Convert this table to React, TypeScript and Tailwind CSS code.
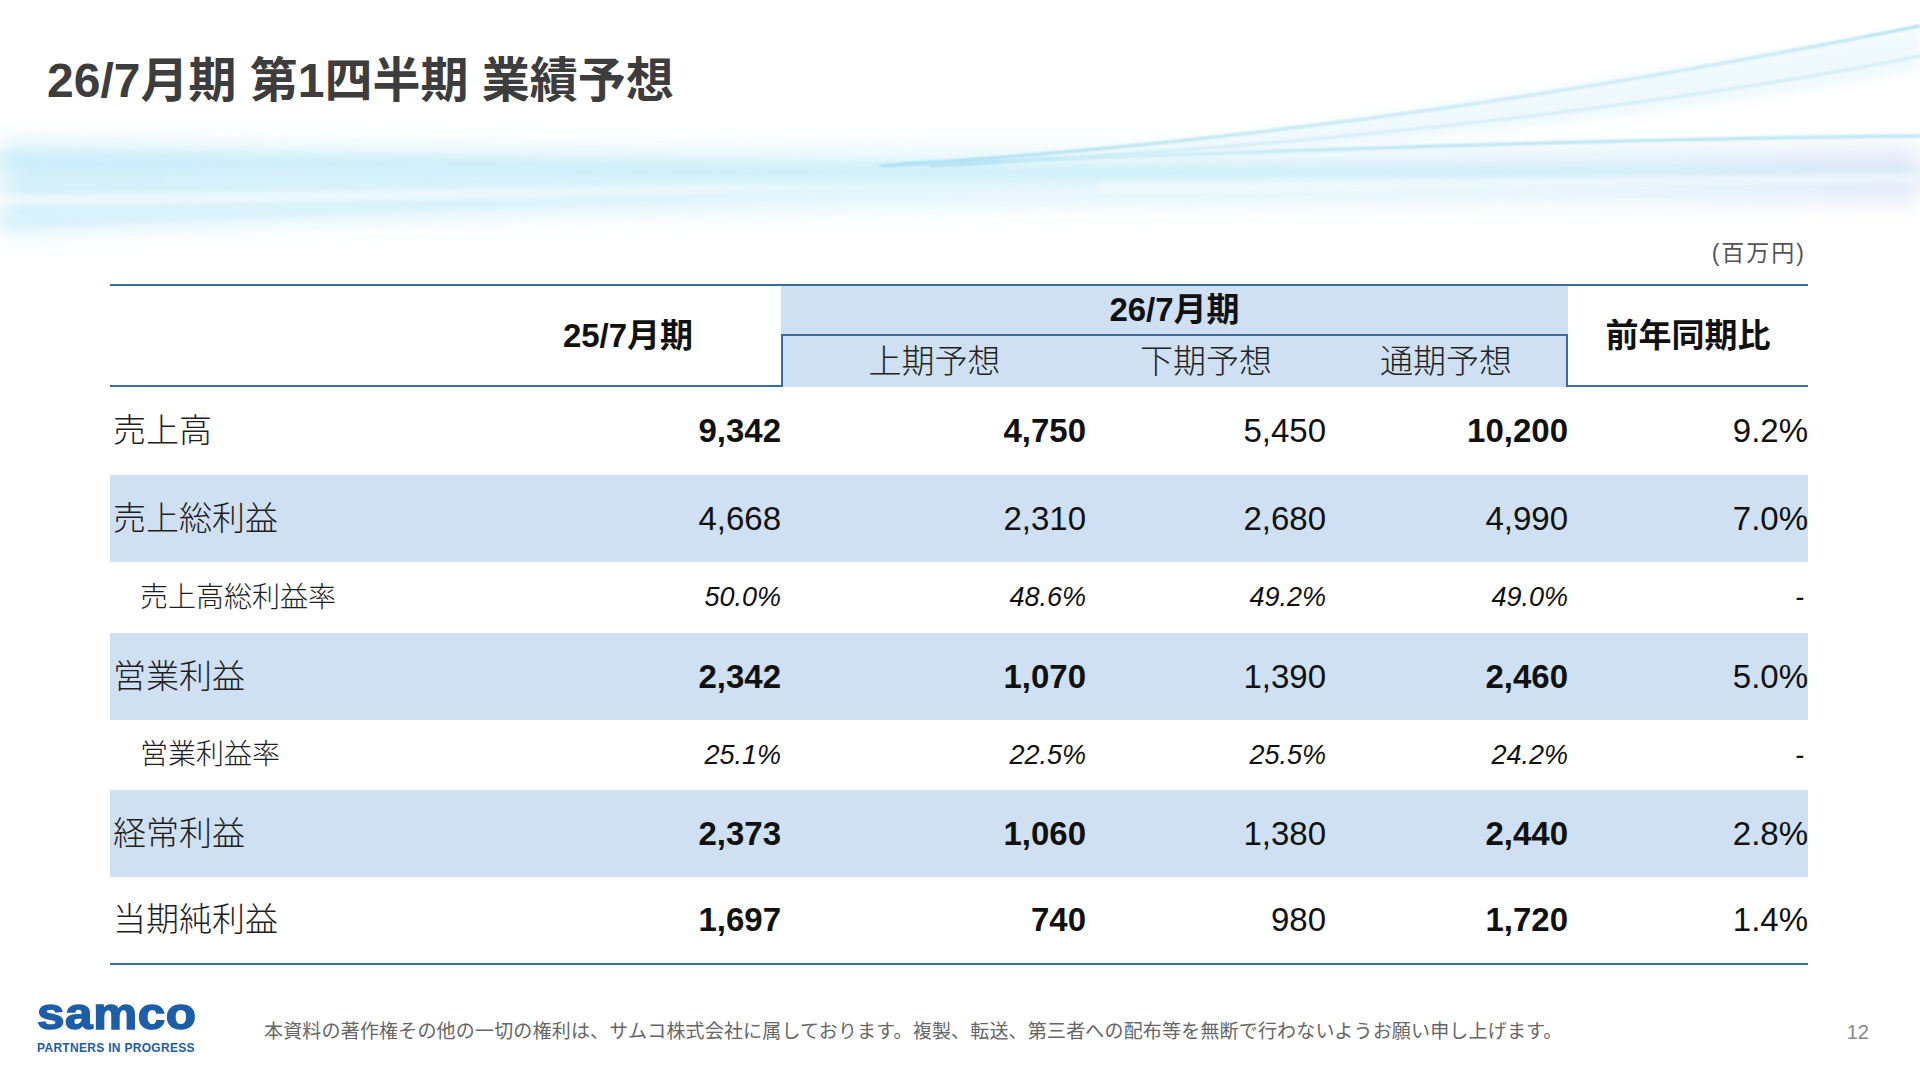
import React from 'react';

type Row = {
  label: string;
  sub?: boolean;
  shaded?: boolean;
  values: string[];
  bold?: boolean[];
};

const rows: Row[] = [
  { label: '売上高', values: ['9,342', '4,750', '5,450', '10,200', '9.2%'], bold: [true, true, false, true, false] },
  { label: '売上総利益', shaded: true, values: ['4,668', '2,310', '2,680', '4,990', '7.0%'] },
  { label: '売上高総利益率', sub: true, values: ['50.0%', '48.6%', '49.2%', '49.0%', '-'] },
  { label: '営業利益', shaded: true, values: ['2,342', '1,070', '1,390', '2,460', '5.0%'], bold: [true, true, false, true, false] },
  { label: '営業利益率', sub: true, values: ['25.1%', '22.5%', '25.5%', '24.2%', '-'] },
  { label: '経常利益', shaded: true, values: ['2,373', '1,060', '1,380', '2,440', '2.8%'], bold: [true, true, false, true, false] },
  { label: '当期純利益', values: ['1,697', '740', '980', '1,720', '1.4%'], bold: [true, true, false, true, false] },
];

// widths of the value columns: 25/7, 上期, 下期, 通期, 前年同期比
const colWidths = ['w-[306px]', 'w-[305px]', 'w-[240px]', 'w-[242px]', 'w-[240px]'];

function Swoosh() {
  return (
    <svg className="pointer-events-none absolute left-0 top-0" width="1920" height="270" viewBox="0 0 1920 270">
      <defs>
        <filter id="blur12" x="-10%" y="-50%" width="120%" height="200%">
          <feGaussianBlur stdDeviation="12" />
        </filter>
        <filter id="blur4" x="-10%" y="-50%" width="120%" height="200%">
          <feGaussianBlur stdDeviation="4" />
        </filter>
        <filter id="blur1" x="-10%" y="-50%" width="120%" height="200%">
          <feGaussianBlur stdDeviation="1.2" />
        </filter>
        <linearGradient id="band" x1="0" y1="0" x2="1" y2="0">
          <stop offset="0" stopColor="#cdeef9" />
          <stop offset="0.5" stopColor="#d8f3fb" />
          <stop offset="0.85" stopColor="#d6eef9" />
          <stop offset="1" stopColor="#dbe2f7" />
        </linearGradient>
      </defs>
      <path d="M0,142 C400,150 1000,158 1920,148 L1920,200 C1300,196 600,206 0,232 Z" fill="url(#band)" opacity="0.85" filter="url(#blur12)" />
      <path d="M0,150 C500,158 1100,168 1920,168 L1920,182 C1100,182 500,176 0,170 Z" fill="#c4eaf7" opacity="0.45" filter="url(#blur4)" />
      <path d="M0,200 C500,190 1200,182 1920,178" stroke="#ffffff" strokeWidth="7" fill="none" opacity="0.85" filter="url(#blur4)" />
      <path d="M0,224 C400,205 800,190 1100,186" stroke="#d3effa" strokeWidth="8" fill="none" opacity="0.6" filter="url(#blur4)" />
      <path d="M880,166 C1300,140 1650,80 1920,26" stroke="#a9dcf0" strokeWidth="3" fill="none" filter="url(#blur1)" />
      <path d="M930,166 C1350,145 1700,100 1920,56" stroke="#b3e1f2" strokeWidth="3" fill="none" filter="url(#blur1)" />
      <path d="M900,164 C1300,150 1650,138 1920,136" stroke="#b6e4f4" strokeWidth="3" fill="none" filter="url(#blur1)" />
      <path d="M1000,162 C1400,120 1700,60 1920,30 L1920,70 C1700,110 1400,150 1000,166 Z" fill="#e6f6fc" opacity="0.6" filter="url(#blur4)" />
    </svg>
  );
}

function Cell({ value, width, bold, sub, last }: { value: string; width: string; bold?: boolean; sub?: boolean; last?: boolean }) {
  return (
    <div
      className={`${width} flex items-center justify-end ${last && value === '-' ? 'pr-[4px]' : 'pr-0'} ${
        sub ? 'text-[27px] italic' : 'text-[33px]'
      } ${bold ? 'font-bold' : 'font-normal'} text-[#111111]`}
    >
      {value}
    </div>
  );
}

export default function App() {
  return (
    <div className="relative h-[1080px] w-[1920px] overflow-hidden bg-white font-['Liberation_Sans','Noto_Sans_CJK_JP',sans-serif]">
      <Swoosh />

      <div className="relative">
        <h1 className="pl-[47px] pt-[53px] text-[48px] font-bold leading-[56px] text-[#3d3d3d]">
          26/7月期 第1四半期 業績予想
        </h1>

        <div className="ml-[110px] w-[1698px]">
          <div className="mt-[129px] pr-[2px] text-right text-[23px] leading-[30px] tracking-[2px] text-[#555555]">(百万円)</div>

          {/* header */}
          <div className="mt-[16px] border-t-2 border-[#3a6d9c]">
            <div className="flex h-[101px]">
              <div className="flex w-[671px] border-b-2 border-[#3a6d9c]">
                <div className="w-[365px]" />
                <div className="flex w-[306px] items-center justify-center text-[33px] font-bold text-[#111111]">25/7月期</div>
              </div>
              <div className="flex w-[787px] flex-col bg-[#cee0f2]">
                <div className="flex h-[48px] items-center justify-center text-[33px] font-bold text-[#111111]">26/7月期</div>
                <div className="flex flex-1 border-l-2 border-r-2 border-t-2 border-[#3a6d9c] text-[33px] font-light text-[#222222]">
                  <div className="flex w-[303px] items-center justify-center">上期予想</div>
                  <div className="flex w-[240px] items-center justify-center">下期予想</div>
                  <div className="flex w-[240px] items-center justify-center">通期予想</div>
                </div>
              </div>
              <div className="flex w-[240px] items-center justify-center border-b-2 border-[#3a6d9c] text-[33px] font-bold text-[#111111]">
                前年同期比
              </div>
            </div>
          </div>

          {/* body */}
          {rows.map((row, i) => {
            const isLast = i === rows.length - 1;
            const height = row.sub ? (i === 2 ? 'h-[71px]' : 'h-[70px]') : i === 0 || isLast ? 'h-[88px]' : 'h-[87px]';
            return (
              <div
                key={row.label}
                className={`flex ${height} ${row.shaded ? 'bg-[#cee0f2]' : ''} ${isLast ? 'border-b-2 border-[#3a6d9c]' : ''}`}
              >
                <div
                  className={`flex w-[365px] items-center font-light ${
                    row.sub ? 'pl-[30px] text-[28px]' : 'pl-[3px] text-[33px]'
                  } text-[#1e1e1e]`}
                >
                  {row.label}
                </div>
                {row.values.map((v, j) => (
                  <Cell
                    key={j}
                    value={v}
                    width={colWidths[j]}
                    bold={row.bold?.[j]}
                    sub={row.sub}
                    last={j === row.values.length - 1}
                  />
                ))}
              </div>
            );
          })}
        </div>

        {/* footer */}
        <div className="mt-[26px] flex items-start">
          <div className="w-[264px] pl-[37px]">
            <div className="h-[45px] origin-left scale-x-[1.1] text-[45px] font-bold leading-[45px] tracking-[0.5px] text-[#1d5ea8] [-webkit-text-stroke:1.5px_#1d5ea8]">
              samco
            </div>
            <div className="mt-[6px] text-[12px] font-bold leading-[12px] tracking-[0.3px] text-[#1d5ea8]">
              PARTNERS IN PROGRESS
            </div>
          </div>
          <div className="mt-[28px] flex-1 text-[19px] leading-[26px] tracking-[0.18px] text-[#666666]">
            本資料の著作権その他の一切の権利は、サムコ株式会社に属しております。複製、転送、第三者への配布等を無断で行わないようお願い申し上げます。
          </div>
          <div className="mt-[28px] pr-[51px] text-[20px] leading-[26px] text-[#888888]">12</div>
        </div>
      </div>
    </div>
  );
}
